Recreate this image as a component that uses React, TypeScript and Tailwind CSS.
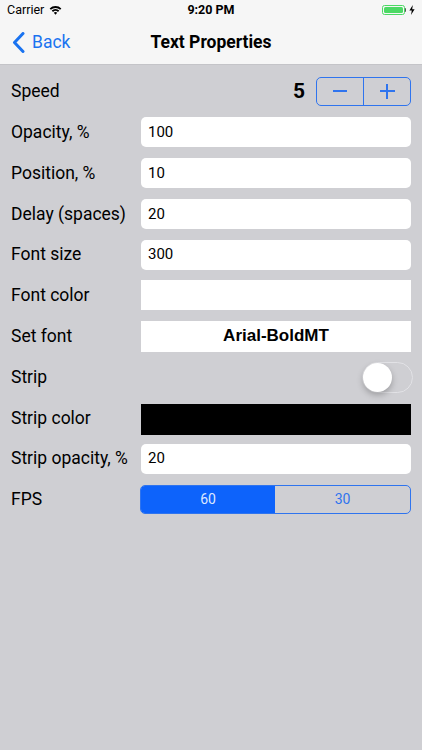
import React from "react";

const font = { fontFamily: "Roboto, 'Liberation Sans', Arial, sans-serif" };

function Field({ value }: { value: string }) {
  return (
    <div className="flex h-[30px] w-[270px] items-center rounded-[5px] bg-white pl-[7px] text-[15px] text-black">
      {value}
    </div>
  );
}

function Row({ label, children }: { label: string; children?: React.ReactNode }) {
  return (
    <div className="flex h-[40.8px] items-center justify-between pl-[11px] pr-[11px]">
      <span className="text-[17.5px] text-black">{label}</span>
      {children}
    </div>
  );
}

export default function App() {
  return (
    <div className="flex h-[750px] w-[422px] flex-col bg-[#cfcfd3]" style={font}>
      {/* status + nav */}
      <div className="border-b border-[#c4c4c8] bg-[#f6f6f6]">
        <div className="relative flex h-[20px] items-center px-[7px] text-[12.5px] text-black">
          <span>Carrier</span>
          <svg className="ml-[5px]" width="13" height="10" viewBox="0 0 13 10">
            <path d="M0.6 3.4 A8.5 8.5 0 0 1 12.4 3.4 L11.1 4.8 A6.6 6.6 0 0 0 1.9 4.8 Z" fill="#000" />
            <path d="M2.7 5.6 A5.5 5.5 0 0 1 10.3 5.6 L9 7 A3.6 3.6 0 0 0 4 7 Z" fill="#000" />
            <path d="M4.8 7.8 A2.5 2.5 0 0 1 8.2 7.8 L6.5 9.7 Z" fill="#000" />
          </svg>
          <span className="absolute left-0 right-0 text-center font-bold">9:20 PM</span>
          <div className="ml-auto flex items-center">
            <div className="flex h-[10px] w-[23px] items-center rounded-[2.5px] border border-[#4cd964] p-[1px]">
              <div className="h-full w-full rounded-[1.5px] bg-[#4cd964]" />
            </div>
            <div className="h-[4px] w-[1.5px] rounded-r-sm bg-[#555]" />
            <svg className="ml-[3px]" width="6" height="10" viewBox="0 0 6 10">
              <path d="M3.8 0 L0.4 5.6 H2.8 L2 10 L5.6 4.2 H3.2 Z" fill="#000" />
            </svg>
          </div>
        </div>
        <div className="relative flex h-[44px] items-center">
          <div className="flex items-center pl-[12px] text-[17.5px] text-[#1a73f0]">
            <svg width="13" height="21" viewBox="0 0 13 21">
              <path d="M11 1.5 L2.5 10.5 L11 19.5" stroke="#1a73f0" strokeWidth="3" fill="none" strokeLinecap="round" strokeLinejoin="round" />
            </svg>
            <span className="ml-[7px]">Back</span>
          </div>
          <span className="pointer-events-none absolute left-0 right-0 text-center text-[17.5px] font-bold text-black">
            Text Properties
          </span>
        </div>
      </div>

      <div className="pt-[6px]">
        <Row label="Speed">
          <div className="flex items-center">
            <span className="mr-[11px] text-[21px] font-bold text-black">5</span>
            <div className="flex h-[29px] w-[95px] rounded-[5px] border border-[#2f74ee]">
              <div className="flex flex-1 items-center justify-center border-r border-[#2f74ee]">
                <div className="h-[2px] w-[14px] bg-[#2f74ee]" />
              </div>
              <div className="relative flex flex-1 items-center justify-center">
                <div className="h-[2px] w-[15px] bg-[#2f74ee]" />
                <div className="absolute h-[15px] w-[2px] bg-[#2f74ee]" />
              </div>
            </div>
          </div>
        </Row>
        <Row label="Opacity, %"><Field value="100" /></Row>
        <Row label="Position, %"><Field value="10" /></Row>
        <Row label="Delay (spaces)"><Field value="20" /></Row>
        <Row label="Font size"><Field value="300" /></Row>
        <Row label="Font color">
          <div className="h-[30px] w-[270px] bg-white" />
        </Row>
        <Row label="Set font">
          <div
            className="flex h-[31px] w-[270px] items-center justify-center bg-white text-[17px] font-bold text-black"
            style={{ fontFamily: "'Liberation Sans', Arial, sans-serif" }}
          >
            Arial-BoldMT
          </div>
        </Row>
        <Row label="Strip">
          <div className="relative -mr-[2px] mt-[2px] h-[31px] w-[51px] rounded-full border border-[#e2e2e6]">
            <div className="absolute left-0 top-0 h-[29px] w-[29px] rounded-full bg-white shadow-[0_3px_6px_rgba(0,0,0,0.25)]" />
          </div>
        </Row>
        <Row label="Strip color">
          <div className="mt-[4px] h-[31px] w-[270px] bg-black" />
        </Row>
        <Row label="Strip opacity, %"><Field value="20" /></Row>
        <Row label="FPS">
          <div className="flex h-[29px] w-[271px] overflow-hidden rounded-[5px] border border-[#2f74ee] text-[14px]">
            <div className="flex w-[134px] items-center justify-center bg-[#0d63fb] text-[#dde8ff]">60</div>
            <div className="flex flex-1 items-center justify-center text-[#2f74ee]">30</div>
          </div>
        </Row>
      </div>
    </div>
  );
}
